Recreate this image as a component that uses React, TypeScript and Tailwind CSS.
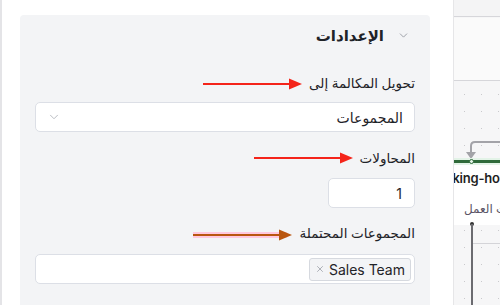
import { ChevronDown, X } from "lucide-react";

function Arrow({ className, color, glow }: { className: string; color: string; glow?: boolean }) {
  return (
    <svg className={className} width="100" height="14" viewBox="0 0 100 14">
      {glow && <line x1="0" y1="7" x2="92" y2="7" stroke="#ffc8de" strokeWidth="6" strokeLinecap="round" />}
      <line x1="0" y1="7" x2="88" y2="7" stroke={color} strokeWidth="2.2" />
      <polygon points="86,1.5 99,7 86,12.5" fill={color} />
    </svg>
  );
}

function Canvas() {
  return (
    <div className="relative flex-1 overflow-hidden border-l border-[#e6e6e8] bg-[#f6f6f7] bg-[radial-gradient(circle,#c9c9cc_0.8px,transparent_1px)] bg-[length:17px_17px] bg-[position:2px_1px]">
      <div className="absolute inset-x-0 top-0 h-[17px] border-b border-[#d6d6da] bg-[#f4f4f5]" />
      <div className="absolute inset-x-0 top-[18px] h-[63px] border-b border-[#d6d6da] bg-[#fafafa]" />
      <svg className="absolute left-[10px] top-[139px]" width="40" height="22" viewBox="0 0 40 22">
        <path d="M40 3 H11 Q7 3 7 7 V14" fill="none" stroke="#a3a3a8" strokeWidth="2" />
        <polygon points="2,13 12,13 7,20" fill="#a3a3a8" />
      </svg>
      <div className="absolute inset-x-0 top-[158px] h-[7px] bg-[#e3f3e7]" />
      <div className="absolute inset-x-0 top-[160px] h-[3px] bg-[#2f6a3a]" />
      <div className="absolute left-[15px] top-[159px] h-[5px] w-[5px] rounded-full border border-[#2f6a3a] bg-[#e3f3e7]" />
      <div className="absolute inset-x-0 top-[165px] h-[60px] bg-white" />
      <div className="absolute left-[-25px] top-[169px] whitespace-nowrap font-['Inter',sans-serif] text-[13px] font-semibold tracking-[-0.2px] text-[#1f1f23]">working-hours</div>
      <div dir="rtl" className="absolute left-[10px] top-[200px] whitespace-nowrap font-['Noto_Sans','DejaVu_Sans',sans-serif] text-[12px] text-[#5b5566]">ساعات العمل</div>
      <div className="absolute left-[16px] top-[222px] h-[4px] w-[4px] rounded-full bg-[#333]" />
      <div className="absolute bottom-0 left-[17px] top-[224px] w-[2px] bg-[#6b6b70]" />
      <div className="absolute left-[19px] right-0 top-[243px] h-px bg-[#d4d4d8]" />
    </div>
  );
}

export default function App() {
  return (
    <div className="flex h-[305px] w-[500px] overflow-hidden bg-white">
      <div className="w-[2px] bg-[#e4e4e7]" />
      <div className="w-[451px] pl-[18px] pr-[23px] pt-[15px]">
        <div dir="rtl" className="relative h-full rounded-t-[4px] bg-[#f3f4f6] px-[15px] pt-[10px] font-['Noto_Sans','DejaVu_Sans',sans-serif] text-[#1f2328]">
          <div className="flex items-center gap-[13px] pr-[5px]">
            <ChevronDown size={13} strokeWidth={1.5} className="text-[#8b8f98]" />
            <span className="text-[15px] font-bold leading-[20px]">الإعدادات</span>
          </div>

          <div className="mt-[28px] flex flex-col">
            <label className="mb-[9px] text-[13.5px] leading-[20px]">تحويل المكالمة إلى</label>
            <div className="flex h-[30px] items-center justify-between rounded-[5px] border border-[#dcdfe6] bg-white px-[11px]">
              <span className="text-[14px]">المجموعات</span>
              <ChevronDown size={14} strokeWidth={1.5} className="text-[#b0b3ba]" />
            </div>

            <label className="mb-[10px] mt-[16px] text-[13.5px] leading-[20px]">المحاولات</label>
            <div className="flex h-[30px] w-[87px] items-center rounded-[5px] border border-[#dcdfe6] bg-white px-[12px] font-['Inter',sans-serif] text-[14px]">
              1
            </div>

            <label className="mb-[11px] mt-[15px] text-[13.5px] leading-[20px]">المجموعات المحتملة</label>
            <div className="flex h-[30px] items-center rounded-[5px] border border-[#dcdfe6] bg-white px-[3px]">
              <div dir="ltr" className="flex h-[23px] items-center gap-[4px] rounded-[3px] border border-[#d6d9df] bg-[#f3f4f6] px-[5px] font-['Inter',sans-serif] text-[14px] text-[#1f2328]">
                <X size={10} strokeWidth={1.6} className="text-[#8b8f98]" />
                <span>Sales Team</span>
              </div>
            </div>
          </div>

          <Arrow className="absolute left-[183px] top-[62px]" color="#f4241a" />
          <Arrow className="absolute left-[234px] top-[136px]" color="#f4241a" />
          <Arrow className="absolute left-[173px] top-[213px]" color="#b9560f" glow />
        </div>
      </div>
      <Canvas />
    </div>
  );
}
